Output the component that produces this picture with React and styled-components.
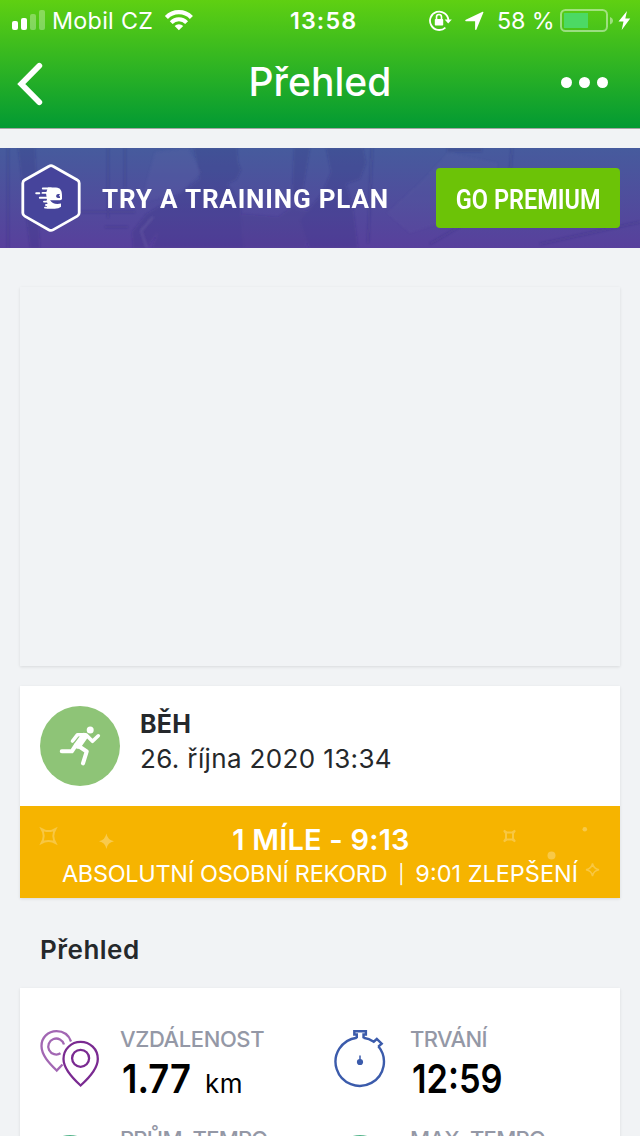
import React from 'react';
import styled, { createGlobalStyle } from 'styled-components';

const GlobalStyle = createGlobalStyle`
  * { box-sizing: border-box; }
  html, body { margin: 0; padding: 0; background: #f1f3f5; overflow: hidden; }
  body { font-family: Inter, "Liberation Sans", sans-serif; color: #25282b; }
  svg { display: block; flex: none; }
`;

const Screen = styled.div`
  width: 640px;
  height: 1136px;
  overflow: hidden;
  background: #f1f3f5;
`;

const Header = styled.header`
  height: 129px;
  color: #fff;
  background: linear-gradient(#5fd012, #029a33);
  border-bottom: 1px solid #a2a7a4;
`;

const StatusBar = styled.div`
  display: grid;
  grid-template-columns: 290px 139px 1fr;
  height: 41px;
  line-height: 41px;
  font-size: 23.3px;
  white-space: nowrap;
`;

const StatusGroup = styled.div`
  display: flex;
  align-items: center;
`;

const Carrier = styled.span`
  width: 102px;
  margin: 0 10px 0 6px;
  letter-spacing: 0.3px;
`;

const Clock = styled.span`
  font-weight: 600;
  letter-spacing: 1.1px;
`;

const Percent = styled.span`
  width: 57px;
  margin: 0 6px 0 12px;
  letter-spacing: -0.1px;
`;

const NavBar = styled.nav`
  display: grid;
  grid-template-columns: 100px 1fr 100px;
  height: 87px;
  padding-bottom: 4px;
  align-items: center;
`;

const BackButton = styled.div`
  padding: 2px 0 0 16px;
`;

const NavTitle = styled.h1`
  margin: 0;
  padding-bottom: 2px;
  text-align: center;
  font-size: 39px;
  line-height: 48px;
  font-weight: 500;
  letter-spacing: 0.05px;
`;

const MoreButton = styled.div`
  display: flex;
  gap: 7px;
  padding-left: 21px;
`;

const Dot = styled.i`
  width: 11px;
  height: 11px;
  border-radius: 50%;
  background: #fff;
`;

const Banner = styled.section`
  position: relative;
  display: flex;
  align-items: center;
  height: 100px;
  margin-top: 19px;
  padding: 0 20px;
  overflow: hidden;
  color: #fff;
  font-family: Roboto, sans-serif;
  white-space: nowrap;
  background: linear-gradient(#465b9d, #58409c);
`;

const BannerArt = styled.svg`
  position: absolute;
  inset: 0;
`;

const BannerBadge = styled.svg`
  position: relative;
`;

const BannerText = styled.div`
  position: relative;
  width: 334px;
  margin-left: 20px;
  font-size: 26px;
  line-height: 36px;
  padding-top: 1px;
  font-weight: 700;
  letter-spacing: 0.83px;
`;

const PremiumButton = styled.div`
  position: relative;
  display: flex;
  justify-content: center;
  width: 184px;
  height: 60px;
  border-radius: 4px;
  background: #6cc307;
  font-size: 28px;
  line-height: 63px;
  font-weight: 600;
`;

const Condensed = styled.span`
  display: inline-block;
  transform: scaleX(${(p) => p.$scale});
  transform-origin: ${(p) => p.$origin || 'center'};
`;

const MapCard = styled.section`
  height: 379px;
  margin: 39px 20px 20px;
  background: #f1f3f5;
  box-shadow: 0 1px 3px rgba(0, 0, 0, 0.1);
`;

const Card = styled.section`
  margin: 0 20px;
  background: #fff;
  box-shadow: 0 1px 3px rgba(0, 0, 0, 0.1);
`;

const Activity = styled.div`
  display: flex;
  gap: 20px;
  height: 120px;
  padding: 20px;
`;

const SportIcon = styled.div`
  width: 80px;
  height: 80px;
  border-radius: 50%;
  background: #8ec477;
`;

const ActivityName = styled.div`
  padding-top: 1px;
  font-size: 25px;
  line-height: 35px;
  font-weight: 700;
  letter-spacing: 0.3px;
`;

const ActivityDate = styled.div`
  font-size: 26px;
  line-height: 34px;
  letter-spacing: 0.36px;
  white-space: nowrap;
`;

const Record = styled.div`
  position: relative;
  height: 92px;
  padding-top: 17px;
  background: #f6b400;
  color: #fff;
  text-align: center;
  white-space: nowrap;
`;

const Sparkles = styled.svg`
  position: absolute;
  inset: 0;
`;

const RecordTitle = styled.div`
  position: relative;
  padding-left: 2px;
  font-size: 29px;
  line-height: 34px;
  font-weight: 600;
  letter-spacing: 0.2px;
`;

const RecordNote = styled.div`
  position: relative;
  display: flex;
  justify-content: center;
  align-items: center;
  font-size: 23.5px;
  line-height: 34px;
`;

const RecordKind = styled.span`
  letter-spacing: -0.31px;
`;

const Divider = styled.span`
  width: 28px;
  font-size: 18.5px;
`;

const SectionTitle = styled.h2`
  height: 90px;
  margin: 0;
  padding: 34px 40px 0;
  font-size: 26px;
  line-height: 36px;
  font-weight: 600;
  letter-spacing: 0.5px;
`;

const Stats = styled(Card)`
  display: grid;
  grid-template-columns: 290px 290px;
  grid-auto-rows: 100px;
  height: 300px;
  padding: 32px 20px 0;
`;

const Stat = styled.div`
  display: flex;
  gap: 20px;
  white-space: nowrap;
`;

const StatLabel = styled.div`
  height: 40px;
  font-size: 22px;
  line-height: 39px;
  font-weight: 500;
  color: #9498a6;
  letter-spacing: ${(p) => p.$spacing || 0}px;
`;

const StatValue = styled.div`
  display: flex;
  align-items: baseline;
  padding-left: 2px;
  color: #000;
  font-size: 40px;
  line-height: 38px;
  font-weight: 600;
`;

const StatNumber = styled(Condensed)`
  width: ${(p) => p.$width}px;
`;

const Unit = styled.span`
  font-size: 26px;
  font-weight: 400;
  letter-spacing: 0.6px;
`;

const StatIcon = styled.svg`
  margin-top: 8px;
`;

const SignalIcon = () => (
  <svg width="46" height="41" fill="#fff">
    <rect x="12" y="21" width="6" height="9" rx="2" />
    <rect x="21" y="18" width="6" height="12" rx="2" />
    <g opacity="0.3">
      <rect x="30" y="14" width="6" height="16" rx="2" />
      <rect x="39" y="10" width="6" height="20" rx="2" />
    </g>
  </svg>
);

const WifiIcon = () => (
  <svg width="30" height="41" viewBox="0 0 30 41" fill="none" stroke="#fff">
    <path d="M2.400 17.400a17.500 17.500 0 0 1 25 0" strokeWidth="4.300" />
    <path d="M7.200 22.600a10.800 10.800 0 0 1 15.400 0" strokeWidth="4" />
    <path d="M14.900 30.200l-4.300-4.300a6.300 6.300 0 0 1 8.600 0z" fill="#fff" stroke="none" />
  </svg>
);

const RotationLockIcon = () => (
  <svg width="23" height="41" viewBox="0 0 23 41" fill="none" stroke="#fff">
    <path d="M16.400 27.600a9.200 9.200 0 1 1 3-7.400" strokeWidth="1.800" />
    <path d="M15.600 19.500h7.200l-3.600 4z" fill="#fff" stroke="none" />
    <rect x="5.800" y="19" width="8.400" height="6.500" rx="0.800" fill="#fff" stroke="none" />
    <path d="M7.500 19v-2a2.500 2.500 0 0 1 5 0V19" strokeWidth="1.600" />
  </svg>
);

const LocationIcon = () => (
  <svg width="33" height="41" viewBox="0 0 33 41" fill="#fff">
    <path d="M30.600 11.800c.6-.3 1 .2.800.8l-7 16.900c-.4.900-1.300.7-1.300-.2v-8.100H14c-1 0-1.100-1-.2-1.400z" />
  </svg>
);

const BatteryIcon = () => (
  <svg width="54" height="41" viewBox="0 0 54 41">
    <rect x="1" y="10" width="46" height="21" rx="4.500" fill="none" stroke="#fff" strokeOpacity="0.45" strokeWidth="2" />
    <rect x="4" y="13" width="24" height="15" fill="#4cd964" />
    <path d="M50 17c4 1.500 4 6 0 7.500z" fill="#fff" fillOpacity="0.45" />
  </svg>
);

const BoltIcon = () => (
  <svg width="17" height="41" viewBox="0 0 17 41" fill="#fff">
    <path d="M13 11L4.500 21.500H9.500L7.700 30L16.200 18.500H11.300z" />
  </svg>
);

const BannerScene = () => (
  <BannerArt width="640" height="100" viewBox="0 0 640 100">
    <defs>
      <filter id="soften">
        <feGaussianBlur stdDeviation="1" />
      </filter>
    </defs>
    <g filter="url(#soften)">
      <g stroke="#2f2a75" fill="none" opacity="0.2">
        <path d="M8 0V100M108 0V70M125 0V40M372 0L368 95M512 0L508 50L430 96" strokeWidth="2" />
        <path d="M78 64H135M105 79H128M540 96L640 74" strokeWidth="2" />
      </g>
      <g fill="#2f2a75" opacity="0.18">
        <path d="M18 0H35L40 100H30zM294 0H310L302 48H292z" />
        <path d="M194 0H237L238 14L241 22L236 32L227 36L232 42L241 58L242 86L244 100H152L158 84L147 100H133L132 84L146 66L178 47L200 31z" />
        <path d="M326 0H363L366 15L360 31L346 36L353 59L358 100H309L300 72L322 45L331 24z" />
        <path d="M242 66L278 69L292 59L315 65L305 100H236z" opacity="0.7" />
        <path d="M447 0H482V4H447z" />
      </g>
      <path d="M143 47L155 4L188 0L201 24L180 44L144 54z" fill="#7776b5" opacity="0.12" />
      <path d="M387 65L421 34L448 5L497 15V55L410 85z" fill="#7776b5" opacity="0.09" />
      <path d="M153 69L141 83L147 100" stroke="#a2a2cc" opacity="0.22" strokeWidth="1.200" fill="none" />
    </g>
  </BannerArt>
);

const BrandBadge = () => (
  <BannerBadge width="62" height="70" viewBox="0 0 62 70">
    <path d="M29 3.200q2-1.200 4 0L57.300 17q1.900 1.100 1.900 3.200V50q0 2-1.900 3.100L33 66.900q-2 1.100-4 0L4.700 53.100Q2.800 52 2.800 50V20.200Q2.800 18.100 4.700 17z" fill="#46449b" stroke="#fff" strokeWidth="2.800" />
    <g fill="#fff">
      <path d="M28 24.500H36C40.500 24.500 42 28 42 33V35.500Q42 37.300 40 37.300H27L26 30z" />
      <path d="M26.500 37H30Q33 42.300 41 40.600V43.700Q39 45.600 34 45.600H26.500L27.500 41z" />
    </g>
    <path d="M22.800 25.500H31M22.500 29.900H30M16.200 30.200H19.300M19.800 34.800H30M24 38.600H29M26 42H29M25 44.600H35" stroke="#fff" strokeWidth="1.900" strokeLinecap="round" />
    <path d="M40 30.900h-1.900c-2.200 0-2.900 3.800.1 4h1.800v-1.700h-1.200z" fill="#46449b" />
  </BannerBadge>
);

const RunnerIcon = () => (
  <svg width="80" height="80" viewBox="0 0 80 80" fill="none" stroke="#fff" strokeLinecap="round" strokeLinejoin="round">
    <circle cx="50.200" cy="24" r="3.500" fill="#fff" stroke="none" />
    <path d="M32.500 35L37.500 28.700H46L52.500 35.300L58.300 29.800" strokeWidth="3.600" />
    <path d="M44 30.700L38 39" strokeWidth="7.300" />
    <path d="M36 39L31.800 45.300H21.800M38.500 40L46.700 45.500L43 57.300" strokeWidth="4.100" />
  </svg>
);

const RecordSparkles = () => (
  <Sparkles width="600" height="92" viewBox="0 0 600 92" fill="none" stroke="#fff" strokeOpacity="0.26" strokeWidth="2">
    <path d="M21.500 23L24.500 24.500Q28.500 25.700 32.500 24.500L35.500 23L34 26Q32.600 30 34 34L35.500 37L32.500 35.500Q28.500 34.300 24.500 35.500L21.500 37L23 34Q24.400 30 23 26z" />
    <path d="M86.400 27.500Q87.500 34 94 35.300Q87.500 36.600 86.400 43Q85.200 36.600 79 35.300Q85.200 34 86.400 27.500z" fill="#fff" fillOpacity="0.3" stroke="none" />
    <path d="M484 24.500L487 26.500H492L495 24.500L493 27.500V32.500L495 35.500L492 33.500H487L484 35.500L486 32.500V27.500z" />
    <path d="M572.500 57.500Q573.500 62.800 579 63.800Q573.500 64.800 572.500 70Q571.500 64.800 566 63.800Q571.500 62.800 572.500 57.500z" strokeWidth="1.500" />
    <circle cx="531.500" cy="49.500" r="4" fill="#fff" fillOpacity="0.28" stroke="none" />
    <circle cx="564.800" cy="23.200" r="2.300" fill="#fff" fillOpacity="0.28" stroke="none" />
  </Sparkles>
);

const DistanceIcon = () => (
  <StatIcon width="60" height="60" viewBox="0 0 60 60" fill="none" strokeWidth="2.300">
    <g stroke="#a267b3">
      <path d="M31 13.500C28.500 6.500 23 3.200 16.500 3.200C8 3.200 1.500 9.500 1.500 18C1.500 27 9 35 16.700 42.500L22.500 36.500" />
      <path d="M24 16.500A8 8 0 1 0 20.500 25.300" />
    </g>
    <g stroke="#7a2a91">
      <path d="M40.600 57.500C34 51.500 23.500 41 23.500 31C23.500 21 31.300 13.900 40.600 13.900S57.800 21 57.800 31C57.800 41 47.300 51.500 40.600 57.500z" />
      <circle cx="40.600" cy="30.300" r="8.500" />
    </g>
  </StatIcon>
);

const StopwatchIcon = () => (
  <StatIcon width="60" height="60" viewBox="0 0 60 60" fill="none" stroke="#3b5bab" strokeWidth="2.400">
    <path d="M26.800 10.300V6.500H24.300V3.200H35.900V6.500H33.500V10.300" />
    <path d="M26.800 9.700A24.200 24.200 0 1 0 48.300 18.200M33.500 9.700A24.200 24.200 0 0 1 43.800 13.700L46.800 11L51.700 15.700L48.300 18.700" />
    <circle cx="30" cy="34" r="3.100" fill="#3b5bab" stroke="none" />
    <path d="M30 27.500V34" strokeWidth="1.500" />
  </StatIcon>
);

const PaceIcon = () => (
  <StatIcon width="60" height="60" viewBox="0 0 60 60" fill="none" stroke="#55b58b" strokeWidth="2.400">
    <circle cx="30" cy="32.200" r="24" />
    <path d="M30 32L39 22" />
  </StatIcon>
);

export default function App() {
  return (
    <>
      <GlobalStyle />
      <Screen>
        <Header>
          <StatusBar>
            <StatusGroup>
              <SignalIcon />
              <Carrier>Mobil CZ</Carrier>
              <WifiIcon />
            </StatusGroup>
            <Clock>13:58</Clock>
            <StatusGroup>
              <RotationLockIcon />
              <LocationIcon />
              <Percent>58 %</Percent>
              <BatteryIcon />
              <BoltIcon />
            </StatusGroup>
          </StatusBar>
          <NavBar>
            <BackButton>
              <svg width="28" height="46" viewBox="0 0 28 46" fill="none" stroke="#fff" strokeWidth="5.800" strokeLinecap="round">
                <path d="M23.300 4.800L5.300 23L23.300 41.200" />
              </svg>
            </BackButton>
            <NavTitle>Přehled</NavTitle>
            <MoreButton>
              <Dot />
              <Dot />
              <Dot />
            </MoreButton>
          </NavBar>
        </Header>

        <Banner>
          <BannerScene />
          <BrandBadge />
          <BannerText>TRY A TRAINING PLAN</BannerText>
          <PremiumButton>
            <Condensed $scale={0.84}>GO PREMIUM</Condensed>
          </PremiumButton>
        </Banner>

        <MapCard />

        <Card>
          <Activity>
            <SportIcon>
              <RunnerIcon />
            </SportIcon>
            <div>
              <ActivityName>BĚH</ActivityName>
              <ActivityDate>26. října 2020 13:34</ActivityDate>
            </div>
          </Activity>
          <Record>
            <RecordSparkles />
            <RecordTitle>1 MÍLE - 9:13</RecordTitle>
            <RecordNote>
              <RecordKind>ABSOLUTNÍ OSOBNÍ REKORD</RecordKind>
              <Divider>|</Divider>
              <span>9:01 ZLEPŠENÍ</span>
            </RecordNote>
          </Record>
        </Card>

        <SectionTitle>Přehled</SectionTitle>

        <Stats>
          <Stat>
            <DistanceIcon />
            <div>
              <StatLabel $spacing={-0.4}>VZDÁLENOST</StatLabel>
              <StatValue>
                <StatNumber $width={83} $scale={0.91} $origin="left">1.77</StatNumber>
                <Unit>km</Unit>
              </StatValue>
            </div>
          </Stat>
          <Stat>
            <StopwatchIcon />
            <div>
              <StatLabel $spacing={-0.6}>TRVÁNÍ</StatLabel>
              <StatValue>
                <StatNumber $width={100} $scale={0.86} $origin="left">12:59</StatNumber>
              </StatValue>
            </div>
          </Stat>
          <Stat>
            <PaceIcon />
            <div>
              <StatLabel $spacing={-0.75}>PRŮM. TEMPO</StatLabel>
            </div>
          </Stat>
          <Stat>
            <PaceIcon />
            <div>
              <StatLabel $spacing={-0.7}>MAX. TEMPO</StatLabel>
            </div>
          </Stat>
        </Stats>
      </Screen>
    </>
  );
}
